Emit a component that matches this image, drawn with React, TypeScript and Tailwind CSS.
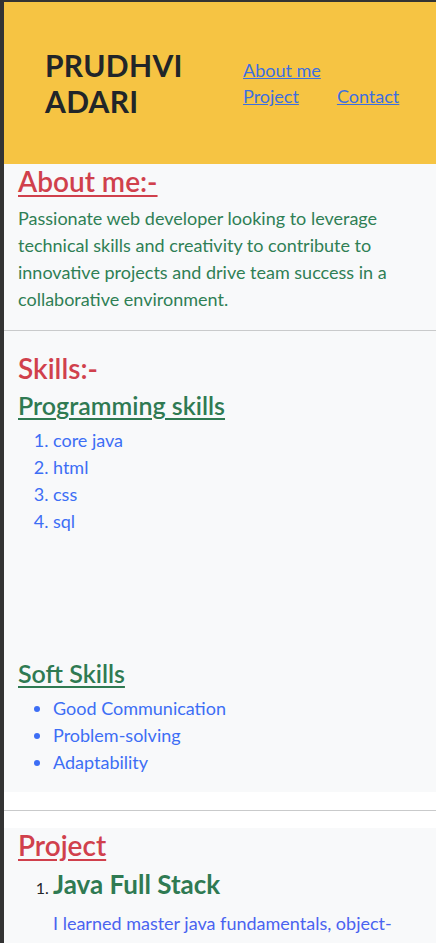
const softSkills = ["Good Communication", "Problem-solving", "Adaptability"];
const progSkills = ["core java", "html", "css", "sql"];

export default function App() {
  return (
    <div className="min-h-screen bg-[#333] pt-[2px] pl-[4px] font-['Lato','Liberation_Sans',sans-serif]">
      <div className="bg-white">
        <header className="flex items-center h-[162px] bg-[#f6c443] pl-[41px]">
          <h1 className="w-[198px] text-[30px] leading-[36px] font-bold text-[#212529] tracking-[0.3px]">
            PRUDHVI ADARI
          </h1>
          <nav className="flex flex-wrap w-[160px] gap-x-[38px] text-[18px] leading-[26px]">
            <a href="#about" className="text-[#3d6fe0] underline">About me</a>
            <a href="#project" className="text-[#3d6fe0] underline">Project</a>
            <a href="#contact" className="text-[#3d6fe0] underline">Contact</a>
          </nav>
        </header>

        <section id="about" className="bg-[#f8f9fa] pl-[14px] pr-[14px] pb-[17px]">
          <h2 className="text-[28px] leading-[34px] font-semibold text-[#d0404c] underline underline-offset-[3px]">
            About me:-
          </h2>
          <p className="mt-[7px] text-[18px] leading-[27px] text-[#2f7f55]">
            Passionate web developer looking to leverage technical skills and creativity to contribute to innovative projects and drive team success in a collaborative environment.
          </p>
        </section>

        <hr className="border-0 border-t border-[#c9cacb]" />

        <section className="bg-[#f8f9fa] pl-[14px] pr-[14px] pt-[20px] pb-[16px]">
          <h2 className="text-[28px] leading-[34px] font-semibold text-[#d0404c]">Skills:-</h2>
          <h3 className="mt-[5px] text-[25px] leading-[30px] font-semibold text-[#2f7a52] underline underline-offset-[3px]">
            Programming skills
          </h3>
          <ol className="mt-[7px] list-decimal pl-[35px] text-[18px] leading-[27px] text-[#3d6ef5]">
            {progSkills.map((s) => (
              <li key={s}>{s}</li>
            ))}
          </ol>
          <h3 className="mt-[123px] text-[25px] leading-[30px] font-semibold text-[#2f7a52] underline underline-offset-[3px]">
            Soft Skills
          </h3>
          <ul className="mt-[7px] list-disc pl-[35px] text-[18px] leading-[27px] text-[#3d6ef5] marker:text-[#3d6ef5]">
            {softSkills.map((s) => (
              <li key={s}>{s}</li>
            ))}
          </ul>
        </section>

        <hr className="mt-[18px] border-0 border-t border-[#c9cacb]" />

        <section id="project" className="mt-[17px] bg-[#f8f9fa] pl-[14px] pr-[14px] pb-[20px]">
          <h2 className="text-[28px] leading-[34px] font-semibold text-[#d0404c] underline underline-offset-[3px]">
            Project
          </h2>
          <ol className="mt-[5px] list-decimal pl-[35px] marker:text-[16px] marker:text-[#212529]">
            <li>
              <h3 className="text-[26px] leading-[34px] font-bold text-[#2f7a52]">Java Full Stack</h3>
              <p className="mt-[9px] text-[18px] leading-[27px] text-[#4a63f0]">
                I learned master java fundamentals, object-oriented programming, and build web applications using Servlets, JSP and JDBC with a database backend.
              </p>
            </li>
          </ol>
        </section>
      </div>
    </div>
  );
}
